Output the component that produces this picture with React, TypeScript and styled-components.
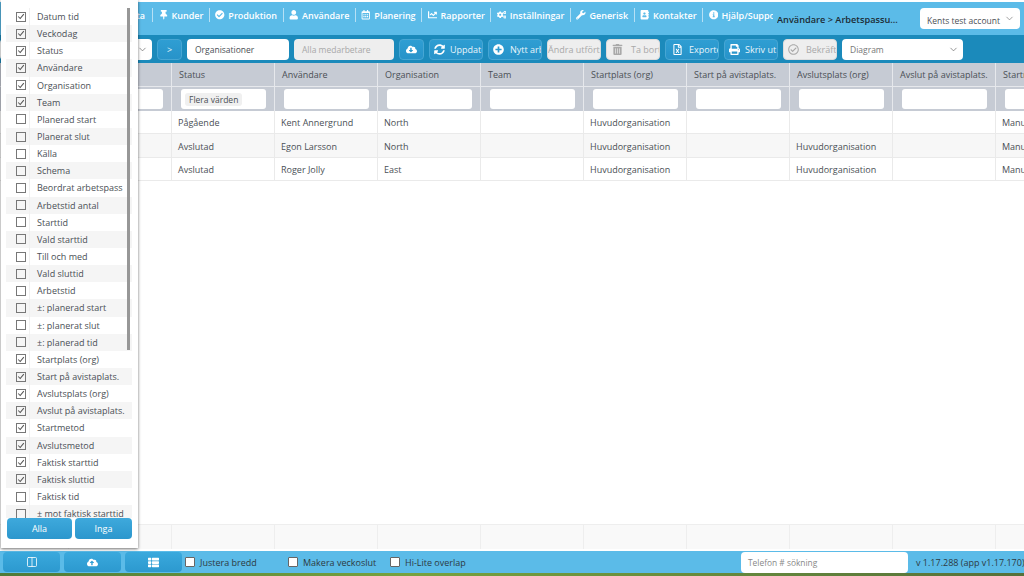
import { ComponentType } from 'react';
import styled, { createGlobalStyle } from 'styled-components';
import { ChevronDown, Columns2 } from 'lucide-react';
import {
  FaAddressBook,
  FaChartLine,
  FaCheckCircle,
  FaCloudDownloadAlt,
  FaCloudUploadAlt,
  FaCogs,
  FaInfoCircle,
  FaPlusCircle,
  FaPrint,
  FaRegCalendarAlt,
  FaRegCheckCircle,
  FaRegFileExcel,
  FaSyncAlt,
  FaThList,
  FaThumbtack,
  FaTrashAlt,
  FaUser,
  FaWrench,
} from 'react-icons/fa';

const navItems: { label: string; icon?: ComponentType }[] = [
  { label: 'Data' },
  { label: 'Kunder', icon: FaThumbtack },
  { label: 'Produktion', icon: FaCheckCircle },
  { label: 'Användare', icon: FaUser },
  { label: 'Planering', icon: FaRegCalendarAlt },
  { label: 'Rapporter', icon: FaChartLine },
  { label: 'Inställningar', icon: FaCogs },
  { label: 'Generisk', icon: FaWrench },
  { label: 'Kontakter', icon: FaAddressBook },
  { label: 'Hjälp/Support', icon: FaInfoCircle },
];

const columnChoices = [
  ['Datum tid', true],
  ['Veckodag', true],
  ['Status', true],
  ['Användare', true],
  ['Organisation', true],
  ['Team', true],
  ['Planerad start', false],
  ['Planerat slut', false],
  ['Källa', false],
  ['Schema', false],
  ['Beordrat arbetspass', false],
  ['Arbetstid antal', false],
  ['Starttid', false],
  ['Vald starttid', false],
  ['Till och med', false],
  ['Vald sluttid', false],
  ['Arbetstid', false],
  ['±: planerad start', false],
  ['±: planerat slut', false],
  ['±: planerad tid', false],
  ['Startplats (org)', true],
  ['Start på avistaplats.', true],
  ['Avslutsplats (org)', true],
  ['Avslut på avistaplats.', true],
  ['Startmetod', true],
  ['Avslutsmetod', true],
  ['Faktisk starttid', true],
  ['Faktisk sluttid', true],
  ['Faktisk tid', false],
  ['± mot faktisk starttid', false],
] as const;

const headers = [
  'Datum tid',
  'Veckodag',
  'Status',
  'Användare',
  'Organisation',
  'Team',
  'Startplats (org)',
  'Start på avistaplats.',
  'Avslutsplats (org)',
  'Avslut på avistaplats.',
  'Startmetod',
];

const rows = [
  ['', '', 'Pågående', 'Kent Annergrund', 'North', '', 'Huvudorganisation', '', '', '', 'Manuell'],
  ['', '', 'Avslutad', 'Egon Larsson', 'North', '', 'Huvudorganisation', '', 'Huvudorganisation', '', 'Manuell'],
  ['', '', 'Avslutad', 'Roger Jolly', 'East', '', 'Huvudorganisation', '', 'Huvudorganisation', '', 'Manuell'],
];

export default function App() {
  return (
    <>
      <GlobalStyle />
      <Page>
        <TopBar>
          <Nav>
            {navItems.map(({ label, icon: Icon }, i) => (
              <NavItem key={label} $lead={i === 0}>
                {Icon && <Icon />}
                {label}
              </NavItem>
            ))}
          </Nav>
          <Breadcrumb>Användare &gt; Arbetspassuppföljning</Breadcrumb>
          <AccountSelect>
            Kents test account
            <ChevronDown size={11} strokeWidth={1.5} />
          </AccountSelect>
        </TopBar>

        <Toolbar>
          <SelectBox $width={152}>
            <ChevronDown size={11} strokeWidth={1.5} />
          </SelectBox>
          <ToolButton $width={25}>&gt;</ToolButton>
          <Field $width={102}>Organisationer</Field>
          <Field $width={100} $disabled>
            Alla medarbetare
          </Field>
          <ToolButton $width={25}>
            <FaCloudDownloadAlt />
          </ToolButton>
          <ToolButton>
            <FaSyncAlt />
            Uppdatera
          </ToolButton>
          <ToolButton $gap={6}>
            <FaPlusCircle />
            Nytt arbetspass
          </ToolButton>
          <ToolButton $disabled $inset={0}>
            Ändra utförts
          </ToolButton>
          <ToolButton $disabled $inset={5} $gap={8}>
            <FaTrashAlt />
            Ta bort
          </ToolButton>
          <ToolButton $inset={6} $gap={6}>
            <FaRegFileExcel />
            Exportera
          </ToolButton>
          <ToolButton>
            <FaPrint />
            Skriv ut
          </ToolButton>
          <ToolButton $disabled $gap={7}>
            <FaRegCheckCircle />
            Bekräfta
          </ToolButton>
          <SelectBox $width={121}>
            Diagram
            <ChevronDown size={11} strokeWidth={1.5} />
          </SelectBox>
        </Toolbar>

        <TableArea>
          <div>
            <HeaderRow>
              {headers.map((h) => (
                <HeaderCell key={h}>{h}</HeaderCell>
              ))}
            </HeaderRow>
            <FilterRow>
              {headers.map((h) => (
                <FilterCell key={h}>
                  <FilterInput>{h === 'Status' && <FilterTag>Flera värden</FilterTag>}</FilterInput>
                </FilterCell>
              ))}
            </FilterRow>
            {rows.map((row, r) => (
              <DataRow key={r} $striped={r === 1}>
                {row.map((value, c) => (
                  <DataCell key={c}>{value}</DataCell>
                ))}
              </DataRow>
            ))}
          </div>
          <SummaryRow>
            {headers.map((h) => (
              <SummaryCell key={h} />
            ))}
          </SummaryRow>
        </TableArea>

        <Footer>
          <FooterButton>
            <Columns2 size={12} strokeWidth={1.6} />
          </FooterButton>
          <FooterButton>
            <FaCloudUploadAlt />
          </FooterButton>
          <FooterButton>
            <FaThList />
          </FooterButton>
          <FooterCheck $width={103}>
            <CheckMark />
            Justera bredd
          </FooterCheck>
          <FooterCheck $width={102}>
            <CheckMark />
            Makera veckoslut
          </FooterCheck>
          <FooterCheck $width={100}>
            <CheckMark />
            Hi-Lite overlap
          </FooterCheck>
          <PhoneSearch>Telefon # sökning</PhoneSearch>
          <Version>v 1.17.288 (app v1.17.170)</Version>
        </Footer>
        <DesktopStrip />

        <ColumnMenu>
          <ChoiceList>
            {columnChoices.map(([label, checked]) => (
              <ChoiceRow key={label}>
                <ChoiceBox>
                  <MenuCheck>
                    {checked && (
                      <svg viewBox="0 0 10 10" width="9" height="9">
                        <path d="M1.5 5 L4 7.5 L8.5 2" fill="none" stroke="#555" strokeWidth="1.3" />
                      </svg>
                    )}
                  </MenuCheck>
                </ChoiceBox>
                <ChoiceLabel>{label}</ChoiceLabel>
              </ChoiceRow>
            ))}
            <MenuScroll />
          </ChoiceList>
          <MenuActions>
            <MenuButton $width={65}>Alla</MenuButton>
            <MenuButton $width={57}>Inga</MenuButton>
          </MenuActions>
        </ColumnMenu>
      </Page>
    </>
  );
}

const GlobalStyle = createGlobalStyle`
  html, body {
    margin: 0;
    padding: 0;
    background: #fff;
  }
  body {
    font-family: "Open Sans", "Liberation Sans", sans-serif;
    font-size: 9px;
    color: #4a4f55;
  }
`;

const Page = styled.div`
  position: relative;
  width: 1024px;
  height: 576px;
  overflow: hidden;
  display: flex;
  flex-direction: column;
  padding-top: 2px;
  box-sizing: border-box;
  background: #fff;
`;

const TopBar = styled.div`
  height: 33px;
  flex-shrink: 0;
  display: flex;
  background: #5bbbe8;
  padding-right: 4px;
`;

const Nav = styled.div`
  width: 773px;
  flex-shrink: 0;
  height: 14px;
  margin-top: 6px;
  display: flex;
  overflow: hidden;
`;

const NavItem = styled.div<{ $lead?: boolean }>`
  display: flex;
  align-items: center;
  justify-content: flex-end;
  gap: 3.5px;
  flex-shrink: 0;
  padding: ${(p) => (p.$lead ? '0 7px 0 0' : '0 5.5px')};
  width: ${(p) => (p.$lead ? '152px' : 'auto')};
  box-sizing: border-box;
  border-left: ${(p) => (p.$lead ? 'none' : '1px solid rgba(255, 255, 255, 0.55)')};
  color: #fff;
  font-weight: 600;
  font-size: 9px;
  white-space: nowrap;

  svg {
    font-size: 9.5px;
  }
`;

const Breadcrumb = styled.div`
  width: 126px;
  margin: 11px 0 0 4px;
  font-weight: 600;
  font-size: 9.2px;
  line-height: 13px;
  color: #1d2c35;
  white-space: nowrap;
  overflow: hidden;
  text-overflow: ellipsis;
`;

const AccountSelect = styled.div`
  width: 100px;
  height: 21px;
  margin: 6px 0 0 17px;
  padding: 3px 5px 0 7px;
  box-sizing: border-box;
  display: flex;
  align-items: center;
  justify-content: space-between;
  background: #fff;
  border-radius: 4px;
  font-size: 8.5px;
  color: #4a4f55;
  white-space: nowrap;

  svg {
    color: #777;
    flex-shrink: 0;
    margin-top: -3px;
  }
`;

const Toolbar = styled.div`
  height: 28px;
  flex-shrink: 0;
  display: flex;
  align-items: flex-start;
  gap: 5px;
  padding-top: 4px;
  box-sizing: border-box;
  background: #1b8abb;
`;

const SelectBox = styled.div<{ $width: number }>`
  width: ${(p) => p.$width}px;
  height: 21px;
  flex-shrink: 0;
  display: flex;
  align-items: center;
  padding: 0 4px 0 8px;
  box-sizing: border-box;
  background: #fff;
  border-radius: 4px;
  color: #777;
  font-size: 8.5px;

  svg {
    color: #666;
    margin-left: auto;
  }
`;

const Field = styled.div<{ $width: number; $disabled?: boolean }>`
  width: ${(p) => p.$width}px;
  height: 21px;
  flex-shrink: 0;
  display: flex;
  align-items: center;
  padding: 0 8px;
  box-sizing: border-box;
  border-radius: 4px;
  background: ${(p) => (p.$disabled ? '#eeeeee' : '#fff')};
  color: ${(p) => (p.$disabled ? '#a8a8a8' : '#4a4f55')};
  font-size: 8.5px;
  white-space: nowrap;
  overflow: hidden;
`;

const ToolButton = styled.div<{ $width?: number; $disabled?: boolean; $inset?: number; $gap?: number }>`
  width: ${(p) => p.$width ?? 54}px;
  height: 21px;
  flex-shrink: 0;
  display: flex;
  align-items: center;
  justify-content: ${(p) => (p.$width ? 'center' : 'flex-start')};
  gap: ${(p) => p.$gap ?? 5}px;
  padding: 0 0 0 ${(p) => (p.$width ? 0 : p.$inset ?? 4)}px;
  box-sizing: border-box;
  overflow: hidden;
  white-space: nowrap;
  border-radius: 4px;
  font-size: 9px;
  border: 1px solid ${(p) => (p.$disabled ? '#dcdcdc' : '#46a6d4')};
  background: ${(p) => (p.$disabled ? '#eeeeee' : 'linear-gradient(#2f9ed3, #2793c9)')};
  color: ${(p) => (p.$disabled ? '#a9a9a9' : '#e8f5fb')};

  svg {
    font-size: 11px;
    flex-shrink: 0;
    color: ${(p) => (p.$disabled ? '#a9a9a9' : '#fff')};
  }
`;

const TableArea = styled.div`
  flex: 1;
  min-height: 0;
  display: flex;
  flex-direction: column;
  justify-content: space-between;
  overflow: hidden;
  padding-bottom: 2px;
`;

const gridColumns = `
  display: grid;
  grid-template-columns: 69px repeat(10, 103px);
`;

const HeaderRow = styled.div`
  ${gridColumns}
  height: 24px;
  background: #c6cbd4;
`;

const HeaderCell = styled.div`
  display: flex;
  align-items: center;
  padding-left: 7px;
  border-right: 1px solid #e6e8ec;
  border-bottom: 1px solid #e6e8ec;
  white-space: nowrap;
  overflow: hidden;
  font-size: 9px;
  color: #4a4f55;
`;

const FilterRow = styled.div`
  ${gridColumns}
  height: 24px;
  background: #c6cbd4;
`;

const FilterCell = styled.div`
  display: flex;
  align-items: center;
  padding: 0 8px 0 9px;
  border-right: 1px solid #e6e8ec;
`;

const FilterInput = styled.div`
  flex: 1;
  height: 20px;
  display: flex;
  align-items: center;
  padding-left: 4px;
  background: #fff;
  border-radius: 3px;
`;

const FilterTag = styled.span`
  padding: 1px 4px;
  background: #f0f0f0;
  border-radius: 3px;
  font-size: 8.5px;
  color: #4a4f55;
`;

const DataRow = styled.div<{ $striped?: boolean }>`
  ${gridColumns}
  height: 23.4px;
  box-sizing: border-box;
  background: ${(p) => (p.$striped ? '#f7f7f7' : '#fff')};
  border-bottom: 1px solid #eaeaea;
`;

const DataCell = styled.div`
  display: flex;
  align-items: center;
  padding: 1px 0 0 6px;
  border-right: 1px solid #eaeaea;
  white-space: nowrap;
  overflow: hidden;
  font-size: 9px;
  color: #4a4f55;
`;

const SummaryRow = styled.div`
  ${gridColumns}
  height: 25px;
  flex-shrink: 0;
  background: #f9f9f9;
  border-top: 1px solid #eeeeee;
  box-sizing: border-box;
`;

const SummaryCell = styled.div`
  border-right: 1px solid #eeeeee;
`;

const Footer = styled.div`
  height: 22px;
  flex-shrink: 0;
  display: flex;
  align-items: center;
  padding-left: 3px;
  background: #5bbbe8;
`;

const FooterButton = styled.div`
  width: 57px;
  height: 20px;
  flex-shrink: 0;
  margin-right: 4px;
  display: flex;
  align-items: center;
  justify-content: center;
  background: linear-gradient(#3aa9dd, #2c99cf);
  border-radius: 4px;
  color: #fff;
  font-size: 11px;
`;

const FooterCheck = styled.div<{ $width: number }>`
  width: ${(p) => p.$width}px;
  flex-shrink: 0;
  display: flex;
  align-items: center;
  gap: 5px;
  color: #2d3a42;
  font-size: 9px;
  white-space: nowrap;

  ${FooterButton} + & {
    margin-left: -1px;
  }
`;

const CheckMark = styled.span`
  width: 8px;
  height: 8px;
  flex-shrink: 0;
  background: #fff;
  border: 1px solid #666;
  border-radius: 1px;
`;

const PhoneSearch = styled.div`
  width: 167px;
  height: 21px;
  flex-shrink: 0;
  margin-left: 251px;
  display: flex;
  align-items: center;
  padding-left: 7px;
  box-sizing: border-box;
  background: #fff;
  border-radius: 4px;
  color: #888;
  font-size: 8.4px;
`;

const Version = styled.div`
  margin-left: 8px;
  white-space: nowrap;
  color: #2d3a42;
  font-size: 9px;
`;

const DesktopStrip = styled.div`
  height: 3px;
  flex-shrink: 0;
  background: linear-gradient(90deg, #4e7a38, #76a23f 40%, #55703a);
`;

const ColumnMenu = styled.div`
  position: absolute;
  left: 1px;
  top: 0;
  width: 137px;
  height: 548px;
  padding: 8px 6px 0 5px;
  box-sizing: border-box;
  background: #fff;
  box-shadow: 0 1px 3px rgba(0, 0, 0, 0.55);
`;

const ChoiceList = styled.div`
  position: relative;
  height: 510px;
  overflow: hidden;
`;

const ChoiceRow = styled.div`
  height: 17.15px;
  display: flex;
  align-items: center;

  &:nth-child(even) {
    background: #f5f5f5;
  }
`;

const ChoiceBox = styled.div`
  width: 24px;
  height: 100%;
  flex-shrink: 0;
  display: flex;
  align-items: center;
  padding-left: 10px;
  border-right: 1px solid #f0f0f0;
  box-sizing: border-box;
`;

const MenuCheck = styled.span`
  width: 8px;
  height: 8px;
  display: flex;
  align-items: center;
  justify-content: center;
  border: 1px solid #777;
  overflow: hidden;
`;

const ChoiceLabel = styled.span`
  padding-left: 7px;
  font-size: 9px;
  color: #4a4f55;
  white-space: nowrap;
`;

const MenuScroll = styled.div`
  position: absolute;
  top: 0;
  right: 2px;
  width: 3px;
  height: 342px;
  background: #979797;
`;

const MenuActions = styled.div`
  display: flex;
  gap: 3px;
  margin-left: 1px;
`;

const MenuButton = styled.div<{ $width: number }>`
  width: ${(p) => p.$width}px;
  height: 21px;
  flex-shrink: 0;
  display: flex;
  align-items: center;
  justify-content: center;
  border-radius: 4px;
  background: linear-gradient(#3ea9dc, #2c97cd);
  color: #fff;
  font-size: 9px;
`;
